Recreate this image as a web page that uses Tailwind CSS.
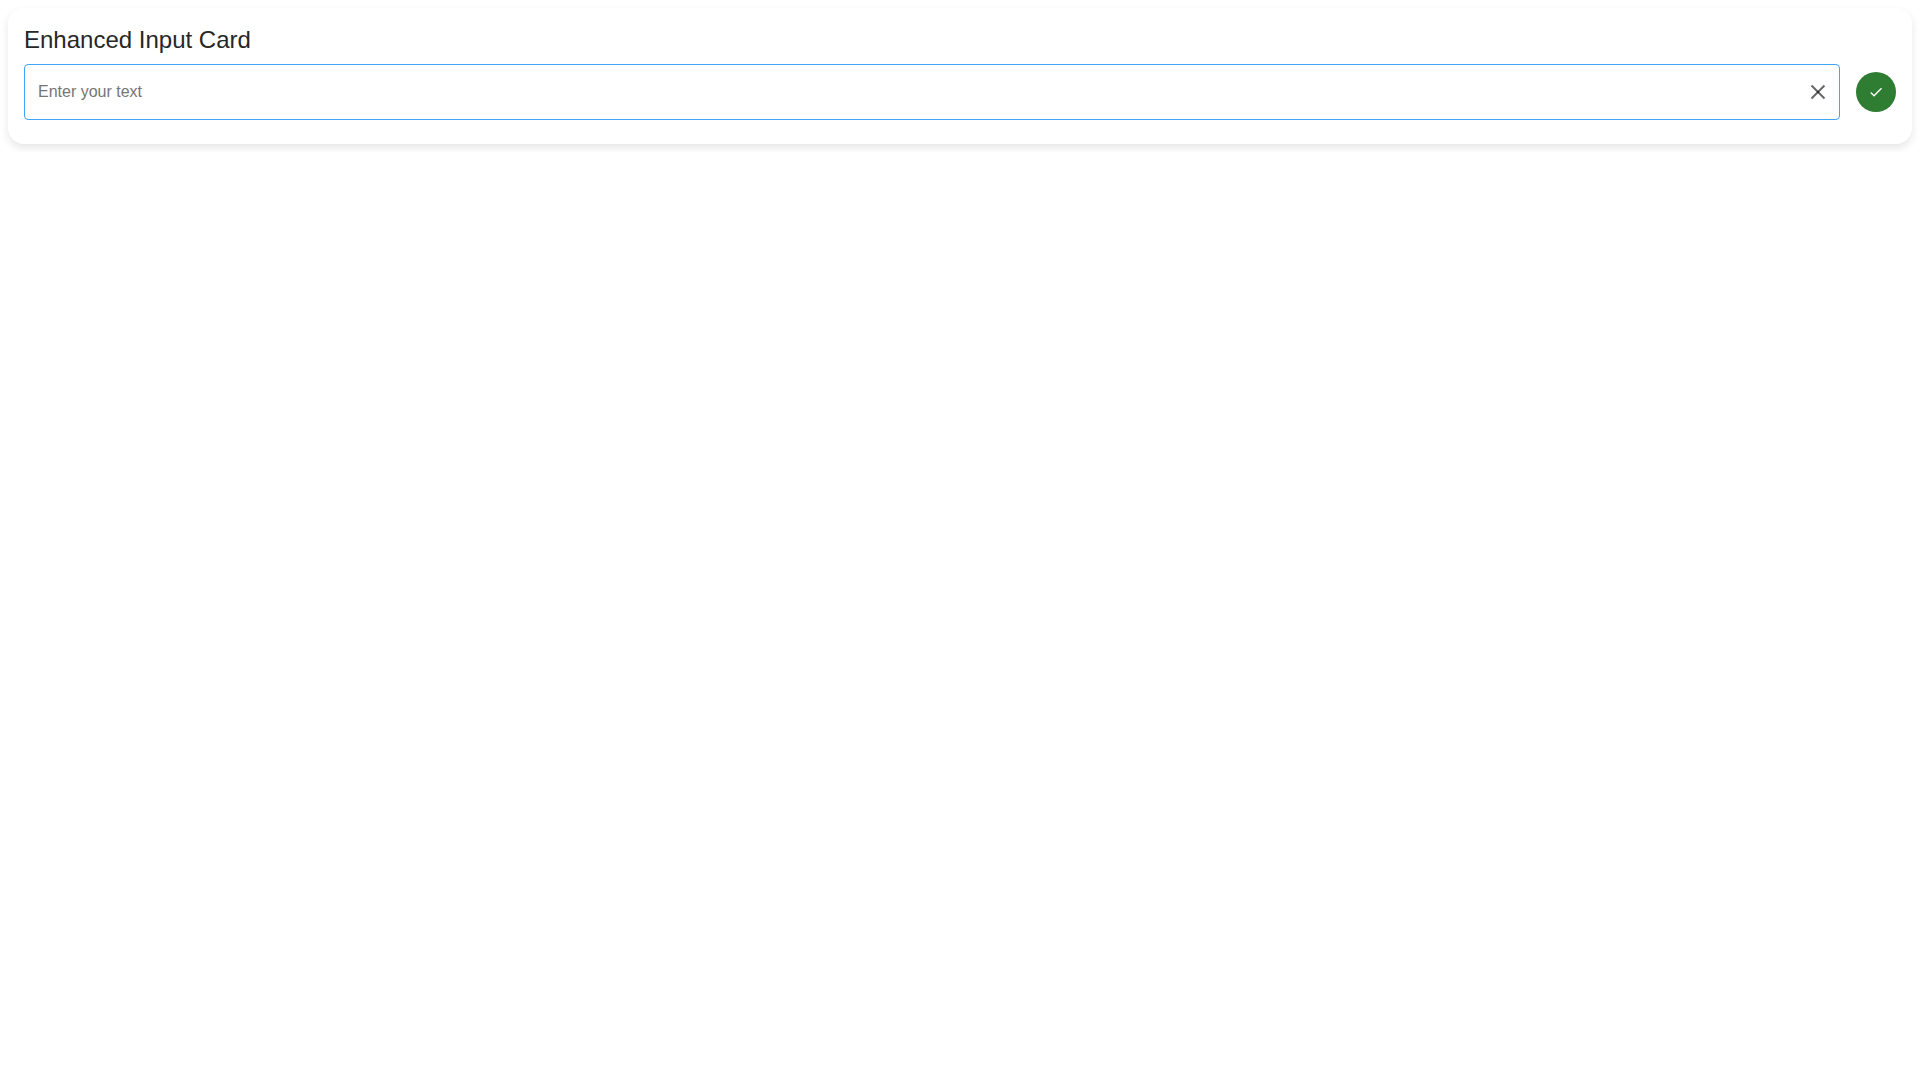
<!DOCTYPE html>
<html lang="en">
<head>
    <meta charset="UTF-8">
    <meta name="viewport" content="width=device-width, initial-scale=1.0">
    <script src="https://cdn.jsdelivr.net/npm/@tailwindcss/browser@4"></script>
    <title>Enhanced Input Card</title>
</head>
<body class="bg-white p-2 font-['Liberation_Sans',Arial,sans-serif]">
<main class="rounded-2xl bg-white px-4 pt-4 pb-6 shadow-[0_4px_8px_rgba(0,0,0,0.1)]">
    <h1 class="mb-2 text-2xl text-[#272727]">Enhanced Input Card</h1>
    <form class="flex items-center gap-4" onsubmit="return false">
        <div class="flex h-14 grow items-center rounded-sm border border-[#42a5f5] px-[9px]">
            <input id="card_text" type="text" aria-label="Enter your text" placeholder="Enter your text"
                   class="h-full min-w-0 grow px-1 text-base text-[#272727] outline-none placeholder:text-[#757575]">
            <button type="button" aria-label="Clear" onclick="clearText()" class="text-black/60">
                <svg class="size-6" viewBox="0 0 24 24" fill="none" stroke="currentColor" stroke-width="2">
                    <path d="M5.5 5.5L18.5 18.5"/>
                    <path d="M18.5 5.5L5.5 18.5"/>
                </svg>
            </button>
        </div>
        <button type="submit" aria-label="Submit"
                class="flex size-10 items-center justify-center rounded-full bg-[#2e7d32] text-white">
            <svg class="size-4" viewBox="0 0 24 24" fill="currentColor">
                <path d="M9 16.17L4.83 12l-1.42 1.41L9 19 21 7l-1.41-1.41z"/>
            </svg>
        </button>
    </form>
</main>
<script>
    function clearText() {
        const input = document.getElementById("card_text")
        input.value = ""
        input.focus()
    }
</script>
</body>
</html>
